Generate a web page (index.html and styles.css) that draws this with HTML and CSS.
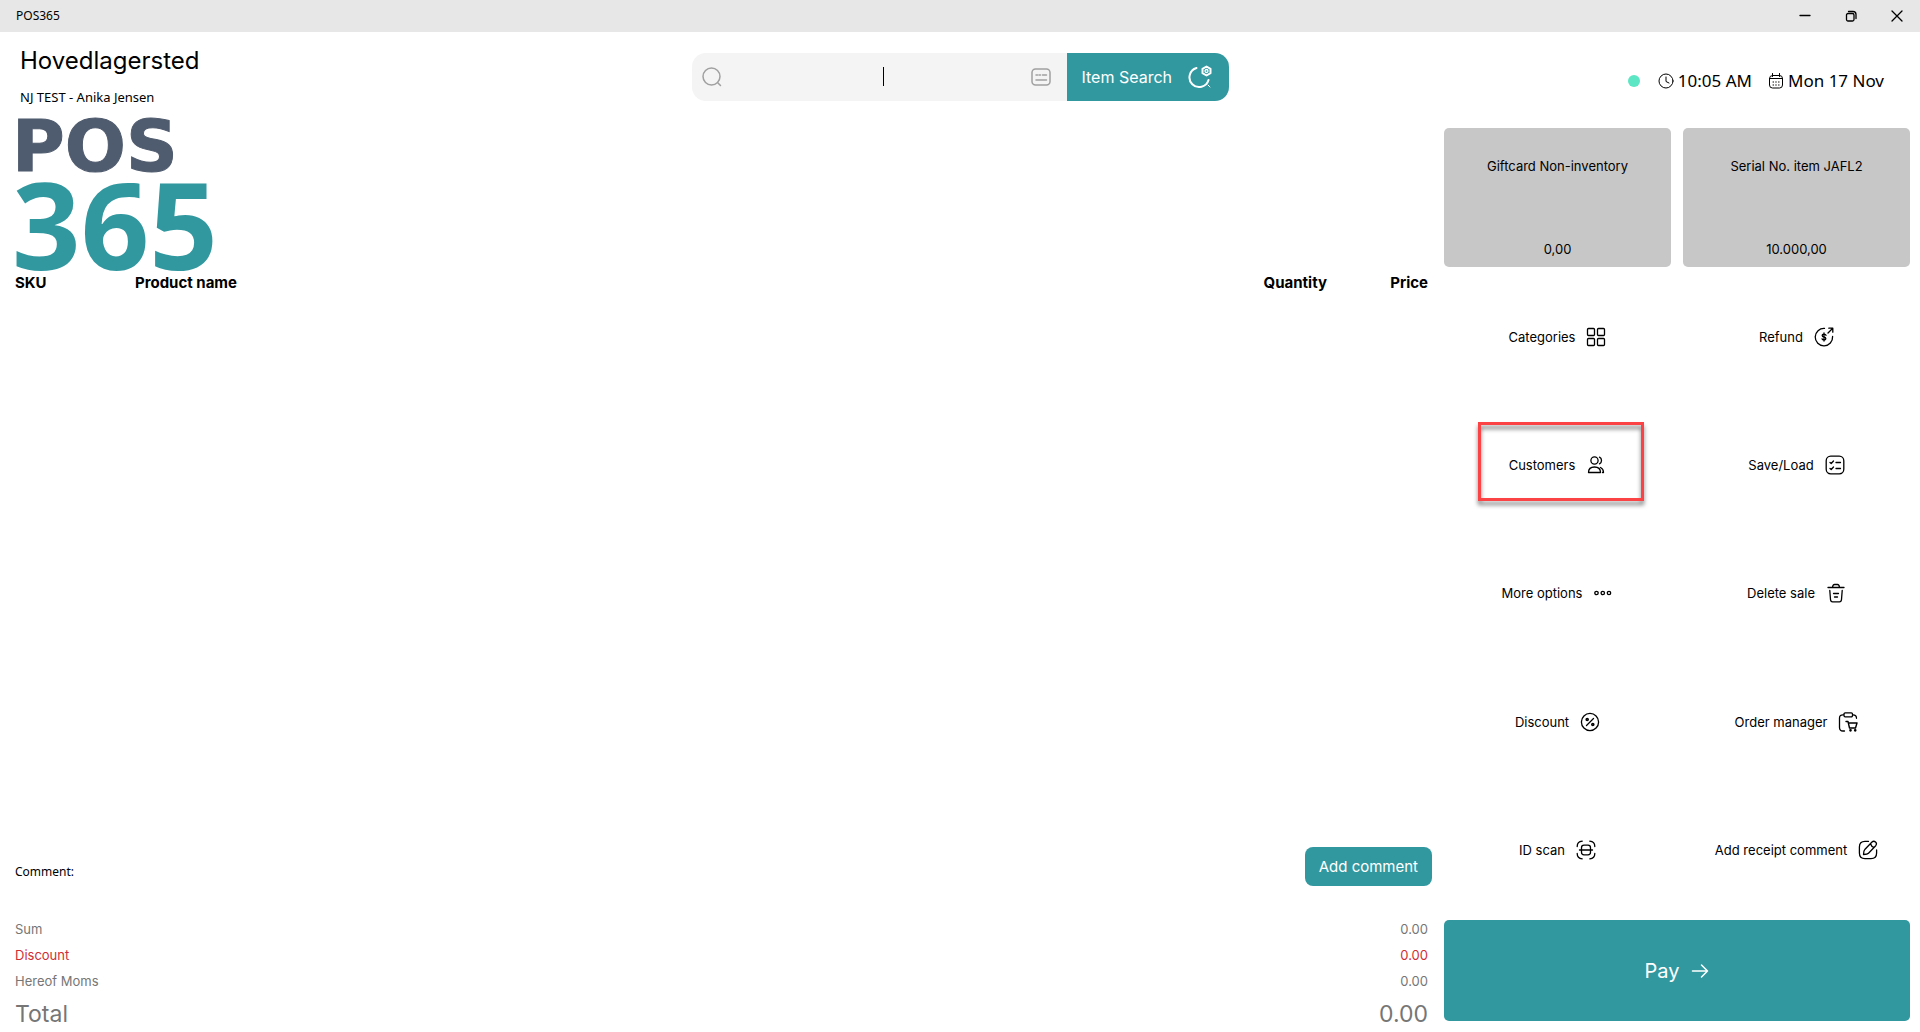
FILE: index.html
```html
<!DOCTYPE html>
<html lang="en">
<head>
<meta charset="utf-8">
<meta name="viewport" content="width=device-width, initial-scale=1">
<title>POS365</title>
<link rel="stylesheet" href="styles.css">
</head>
<body>
<div class="titlebar">
  <span class="titlebar-name">POS365</span>
  <div class="window-controls">
    <button type="button" aria-label="Minimize"><svg width="12" height="12" viewBox="0 0 12 12"><path d="M1 5.5h10"/></svg></button>
    <button type="button" aria-label="Restore"><svg width="12" height="12" viewBox="0 0 12 12"><rect x="1.5" y="3.5" width="7.500" height="7.500" rx="1.500"/><path d="M3.500 1.500h4.500a3 3 0 0 1 3 3v4"/></svg></button>
    <button type="button" aria-label="Close"><svg width="12" height="12" viewBox="0 0 12 12"><path d="M1 1l10 10M11 1L1 11"/></svg></button>
  </div>
</div>

<header class="header">
  <div class="store">
    <h1 class="store-name">Hovedlagersted</h1>
    <p class="store-user">NJ TEST - Anika Jensen</p>
  </div>
  <form class="search">
    <label class="search-field">
      <svg class="search-icon" width="20" height="20" viewBox="0 0 20 20"><circle cx="9.500" cy="9.500" r="8.500"/><path d="M16 16l2.500 2.500"/></svg>
      <input type="text" aria-label="Search items" autocomplete="off">
      <span class="caret"></span>
      <svg class="search-icon" width="20" height="18" viewBox="0 0 20 18"><rect x="1" y="1" width="18" height="16" rx="3.500"/><path d="M5 7h1.500M8 7h1.500M11.500 7h4M5 12h10.500"/></svg>
    </label>
    <button type="button" class="search-button">Item Search
      <svg width="24" height="24" viewBox="0 0 24 24"><path d="M8.500 3A9.700 9.700 0 1 0 20.500 15" stroke-width="2"/><path d="M20 20l2 2" stroke-width="1"/><path d="M18.500 1.500l4 2.300v4.400l-4 2.300-4-2.300V3.800z" stroke-width="2"/><circle cx="18.500" cy="6" r="1.500"/></svg>
    </button>
  </form>
  <div class="status">
    <span class="online"></span>
    <span class="status-item"><svg width="16" height="16" viewBox="0 0 16 16"><circle cx="8" cy="8" r="7"/><path d="M8 4v4.500l3 1.500"/></svg>10:05 AM</span>
    <span class="status-item"><svg width="16" height="16" viewBox="0 0 16 16"><rect x="1.500" y="2.500" width="13" height="12.500" rx="3"/><path d="M1.500 5.500h13M4.500.5v3M11.500.5v3"/><path d="M5 9h.6M7.700 9h.6M10.500 9h.6M5 12h.6M7.700 12h.6M10.500 12h.6"/></svg>Mon 17 Nov</span>
  </div>
</header>

<main class="main">
  <section class="sale">
    <div class="logo"><span class="logo-pos">POS</span><span class="logo-365">365</span></div>
    <table class="lines">
      <thead><tr><th class="col-sku">SKU</th><th>Product name</th><th class="col-qty">Quantity</th><th class="col-price">Price</th></tr></thead>
    </table>
    <div class="comment">
      <span>Comment:</span>
      <button type="button" class="comment-button">Add comment</button>
    </div>
    <dl class="totals">
      <div><dt>Sum</dt><dd>0.00</dd></div>
      <div class="discount"><dt>Discount</dt><dd>0.00</dd></div>
      <div><dt>Hereof Moms</dt><dd>0.00</dd></div>
      <div class="total"><dt>Total</dt><dd>0.00</dd></div>
    </dl>
  </section>

  <aside class="side">
    <div class="tiles">
      <button type="button" class="tile"><span>Giftcard Non-inventory</span><span>0,00</span></button>
      <button type="button" class="tile"><span>Serial No. item JAFL2</span><span>10.000,00</span></button>
    </div>
    <nav class="actions">
      <button type="button">Categories
        <svg width="20" height="20" viewBox="0 0 20 20"><rect x="1.500" y="1.500" width="7" height="7" rx="1"/><rect x="11.500" y="1.500" width="7" height="7" rx="1"/><rect x="1.500" y="11.500" width="7" height="7" rx="1"/><rect x="11.500" y="11.500" width="7" height="7" rx="1"/></svg></button>
      <button type="button">Refund
        <svg width="20" height="20" viewBox="0 0 20 20"><path d="M10.500 1.400A8.700 8.700 0 1 0 18.600 9.500"/><path d="M14 6l4.500-4.500M14.800 1.200h4v4"/><path d="M12 8.300q-.4-1.100-2-1.100c-2.500 0-2.300 2.500 0 2.800s2.500 2.900 0 2.900Q8.400 12.900 8 11.800M10 6v8" stroke-width="1.300"/></svg></button>
      <button type="button" class="highlighted">Customers
        <svg width="20" height="20" viewBox="0 0 20 20"><circle cx="8.500" cy="5.500" r="3.600"/><path d="M13.500 2.200q2 1 2 3.300t-2 3.300M2.500 17.500q0-5.500 6-5.500t6 5.500zM14.500 12.500q3 1.500 3 5h-1"/></svg></button>
      <button type="button">Save/Load
        <svg width="20" height="20" viewBox="0 0 20 20"><rect x="1.200" y="1.200" width="17.600" height="17.600" rx="4.500"/><path d="M5 7.500l1.200 1L8.500 6M5 13.500l1.200 1L8.500 12M11 7.500h4.500M11 13.500h4.500"/></svg></button>
      <button type="button">More options
        <svg width="20" height="20" viewBox="0 0 20 20"><circle cx="3.500" cy="10" r="1.700"/><circle cx="9.800" cy="10" r="1.700"/><circle cx="16" cy="10" r="1.700"/></svg></button>
      <button type="button">Delete sale
        <svg width="20" height="20" viewBox="0 0 20 20"><path d="M2 4.500h16M6.500 4.500q.3-3 2-3h3q1.700 0 2 3M3.800 7.500l.7 9q.2 2.300 2 2.300h7q1.800 0 2-2.300l.7-9M7.500 10.500h5M8.500 14h3"/></svg></button>
      <button type="button">Discount
        <svg width="20" height="20" viewBox="0 0 20 20"><circle cx="10" cy="10" r="8.600"/><path d="M6.500 13.500l7-7"/><circle cx="7.200" cy="7.500" r="1" stroke-width="1.600"/><circle cx="12.800" cy="12.500" r="1" stroke-width="1.600"/></svg></button>
      <button type="button">Order manager
        <svg width="20" height="20" viewBox="0 0 20 20"><rect x="6" y=".8" width="8.500" height="4" rx="1.200"/><path d="M5.500 2.800Q1.500 2.500 1.500 6v9.500q0 3.500 3.500 3.500h1.500M15 2.800q3.500 0 3.500 3.500"/><path d="M8 9.500h2l1.500 6.500h6l1.500-5h-8.500" stroke-width="1.400"/><circle cx="12.500" cy="18.300" r=".7"/><circle cx="17.200" cy="18.300" r=".7"/></svg></button>
      <button type="button">ID scan
        <svg width="20" height="20" viewBox="0 0 20 20"><path d="M1.200 6.500q0-5 5-5.300M13.800 1.200q5 .3 5 5.300M18.800 13.500q0 5-5 5.300M6.200 18.800q-5-.3-5-5.300"/><rect x="5.500" y="5.200" width="9" height="9.600" rx="2.500"/><path d="M3.500 10h13"/></svg></button>
      <button type="button">Add receipt comment
        <svg width="20" height="20" viewBox="0 0 20 20"><path d="M10.500 1.400H7q-5.600 0-5.600 5.600v6q0 5.600 5.600 5.600h6q5.600 0 5.600-5.600v-3"/><path d="M14 2q1.700-1.600 3.500 0t.2 3.700l-7.200 7.500q-1 1.100-5 1.300.2-4 1.300-5zM12.500 3.700q.8 2.800 3.500 3.600"/></svg></button>
    </nav>
    <button type="button" class="pay">Pay
      <svg width="18" height="18" viewBox="0 0 18 18"><path d="M1.500 9h15M10.500 3l6 6-6 6"/></svg>
    </button>
  </aside>
</main>
</body>
</html>
```

FILE: styles.css
```css
:root {
  --teal: #3298a0;
  --ui: "Inter", "Liberation Sans", sans-serif;
  --system: "Noto Sans", "Open Sans", sans-serif;
}

* {
  box-sizing: border-box;
}

body {
  margin: 0;
  min-height: 100vh;
  display: flex;
  flex-direction: column;
  background: #fff;
  color: #000;
  font: 13px/20px var(--ui);
}

button {
  border: 0;
  padding: 0;
  background: none;
  color: inherit;
  font: inherit;
}

svg {
  flex: none;
  fill: none;
  stroke: currentColor;
  stroke-width: 1.3;
  stroke-linecap: round;
  stroke-linejoin: round;
}

.titlebar {
  display: flex;
  align-items: center;
  justify-content: space-between;
  height: 32px;
  padding-left: 16px;
  background: #e7e7e7;
  font: 12px/18px var(--system);
}

.window-controls {
  display: flex;
}

.window-controls button {
  display: flex;
  align-items: center;
  justify-content: center;
  width: 46px;
  height: 32px;
}

.header {
  display: grid;
  grid-template-columns: 1fr auto 1fr;
  height: 88px;
  padding: 13px 36px 0 20px;
}

.store-name {
  margin: 0;
  font: 400 24px/32px var(--ui);
}

.store-user {
  margin: 11px 0 0;
  font: 13px/18px var(--system);
}

.search {
  display: flex;
  height: 48px;
  margin-top: 8px;
  margin-left: 16px;
}

.search-field {
  position: relative;
  display: flex;
  align-items: center;
  gap: 12px;
  width: 375px;
  padding: 0 16px 0 10px;
  border-radius: 14px 0 0 14px;
  background: #f4f4f4;
}

.search-icon {
  color: #a0a0a0;
  stroke-width: 1.5;
}

.search-field input {
  flex: 1;
  min-width: 0;
  border: 0;
  outline: 0;
  background: none;
  font: 16px/24px var(--ui);
  text-align: center;
}

.caret {
  position: absolute;
  left: 191px;
  top: 14px;
  width: 1px;
  height: 19px;
  background: #000;
}

.search-button {
  display: flex;
  align-items: center;
  gap: 16px;
  width: 162px;
  padding-left: 15px;
  border-radius: 0 14px 14px 0;
  background: var(--teal);
  color: #fff;
  font-size: 16px;
}

.status {
  display: flex;
  align-items: center;
  justify-content: flex-end;
  gap: 16px;
  height: 24px;
  margin-top: 24px;
  font: 17px/24px var(--system);
}

.status-item {
  display: flex;
  align-items: center;
  gap: 4px;
}

.status svg {
  stroke-width: 1;
}

.online {
  width: 12px;
  height: 12px;
  margin-right: 2px;
  border-radius: 50%;
  background: #5ce6c3;
}

.main {
  flex: 1;
  display: grid;
  grid-template-columns: minmax(0, 1fr) 466px;
  gap: 12px;
  padding: 0 10px 0 15px;
}

.sale {
  display: flex;
  flex-direction: column;
  padding-bottom: 4px;
}

.logo {
  display: flex;
  flex-direction: column;
  height: 153px;
  margin-left: -3px;
}

.logo-pos {
  color: #4f5b6e;
  font: 700 72px/52px "DejaVu Sans", sans-serif;
  -webkit-text-stroke: 1px #4f5b6e;
}

.logo-365 {
  color: var(--teal);
  font: 700 120px/104px var(--system);
}

.lines {
  width: 100%;
  border-collapse: collapse;
  font-size: 15px;
}

.lines th {
  padding: 0;
  font-weight: 700;
  line-height: 20px;
  text-align: left;
}

.lines .col-sku {
  width: 120px;
}

.lines .col-qty {
  width: 120px;
  text-align: right;
}

.lines .col-price {
  width: 105px;
  padding-right: 4px;
  text-align: right;
}

.comment {
  display: flex;
  justify-content: space-between;
  margin-top: auto;
  font: 12px/16px var(--system);
  align-items: center;
}

.comment span {
  padding-top: 10px;
}

.comment-button {
  height: 39px;
  padding: 0 14px;
  border-radius: 8px;
  background: var(--teal);
  color: #fff;
  font: 15px/20px var(--ui);
}

.totals {
  margin: 30px 0 0;
  padding-right: 4px;
  color: #767676;
}

.totals div {
  display: flex;
  justify-content: space-between;
  line-height: 26px;
}

.totals dd {
  margin: 0;
}

.totals .discount {
  color: #cf2e34;
}

.totals .total {
  font-size: 23px;
  line-height: 28px;
  padding-top: 6px;
}

.side {
  display: flex;
  flex-direction: column;
  padding: 8px 0 11px;
}

.tiles {
  display: grid;
  grid-template-columns: 1fr 1fr;
  gap: 12px;
}

.tile {
  display: flex;
  flex-direction: column;
  align-items: center;
  justify-content: space-between;
  height: 139px;
  padding: 28px 8px 8px;
  border-radius: 5px;
  background: #c7c7c7;
}

.actions {
  flex: 1;
  display: grid;
  grid-template-columns: 1fr 1fr;
  grid-auto-rows: 1fr;
  column-gap: 12px;
  margin: 6px 0;
}

.actions button {
  position: relative;
  display: flex;
  align-items: center;
  justify-content: center;
  gap: 11px;
}

.actions .highlighted::after {
  content: "";
  position: absolute;
  inset: 21px 27px 28px 34px;
  border: 3px solid #fb4245;
  filter: drop-shadow(0 4px 2px rgba(0, 0, 0, 0.5));
}

.pay {
  display: flex;
  align-items: center;
  justify-content: center;
  gap: 12px;
  height: 101px;
  border-radius: 5px;
  background: var(--teal);
  color: #fff;
  font-size: 20px;
}

.pay svg {
  stroke-width: 1.5;
}
```
